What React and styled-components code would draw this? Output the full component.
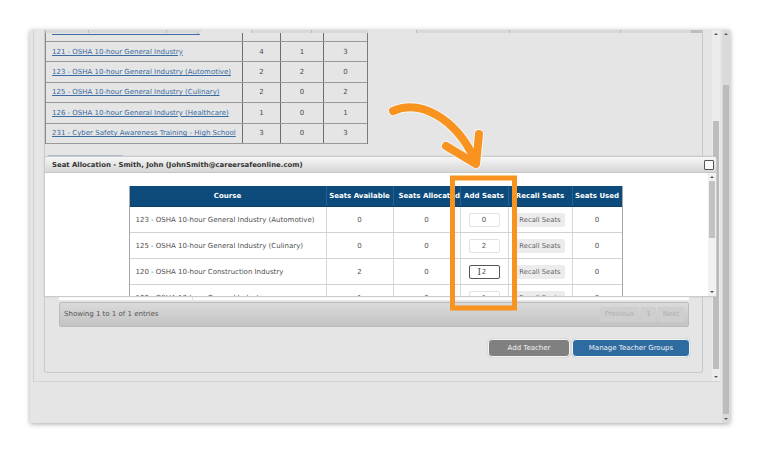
import React from 'react';
import styled, { createGlobalStyle } from 'styled-components';

const GlobalStyle = createGlobalStyle`
  html, body { margin: 0; padding: 0; background: #fff; }
  body { font-family: "DejaVu Sans", Verdana, sans-serif; }
  * { box-sizing: border-box; }
`;

const courses = [
  { name: '120 - OSHA 10-hour Construction Industry', a: 2, b: 1, c: 1 },
  { name: '121 - OSHA 10-hour General Industry', a: 4, b: 1, c: 3 },
  { name: '123 - OSHA 10-hour General Industry (Automotive)', a: 2, b: 2, c: 0 },
  { name: '125 - OSHA 10-hour General Industry (Culinary)', a: 2, b: 0, c: 2 },
  { name: '126 - OSHA 10-hour General Industry (Healthcare)', a: 1, b: 0, c: 1 },
  { name: '231 - Cyber Safety Awareness Training - High School', a: 3, b: 0, c: 3 },
];

const seats = [
  { name: '123 - OSHA 10-hour General Industry (Automotive)', avail: 0, alloc: 0, add: '0', used: 0 },
  { name: '125 - OSHA 10-hour General Industry (Culinary)', avail: 0, alloc: 0, add: '2', used: 0 },
  { name: '120 - OSHA 10-hour Construction Industry', avail: 2, alloc: 0, add: '2', used: 0, focus: true },
  { name: '122 - OSHA 10-hour General Industry', avail: 1, alloc: 0, add: '1', used: 0 },
];

const Scrollbar = ({ top, size, track, thumb }) => (
  <Bar $track={track}>
    <Arrow />
    <Track>
      <Thumb $thumb={thumb} style={{ marginTop: top, height: size }} />
    </Track>
    <Arrow $down />
  </Bar>
);

export default function App() {
  return (
    <>
      <GlobalStyle />
      <Stage>
        <Window>
          <WindowBody>
            <OuterPanel>
              <PanelScroll>
                <ContentBox>
                  <Strip>
                    <StripCell $w={43} />
                    <StripCell $w={78} />
                    <StripCell $w={35} />
                    <StripCell $w={50} $blank />
                    <StripCell $w={60} />
                    <StripCell $w={57} />
                    <StripCell $w={48} $blank />
                    <StripCell $w={93} />
                    <StripCell $w={111} />
                    <StripCell $w={71} />
                    <StripCell $w={13} $dark />
                  </Strip>
                  <TableClip>
                    <CourseTable>
                      {courses.map(c => (
                        <CourseRow key={c.name}>
                          <CourseName>{c.name}</CourseName>
                          <Num>{c.a}</Num>
                          <Num>{c.b}</Num>
                          <Num>{c.c}</Num>
                        </CourseRow>
                      ))}
                    </CourseTable>
                  </TableClip>
                  <Tab />
                  <TeacherArea>
                    <span /><span /><span /><span /><span />
                  </TeacherArea>
                  <InfoBar>
                    <InfoText>Showing 1 to 1 of 1 entries</InfoText>
                    <Pager>
                      <PageBtn>Previous</PageBtn>
                      <PageBtn>1</PageBtn>
                      <PageBtn>Next</PageBtn>
                    </Pager>
                  </InfoBar>
                  <ButtonRow>
                    <ActionButton $color="#808080" $w={82}>Add Teacher</ActionButton>
                    <ActionButton $color="#2d6ba1" $w={118}>Manage Teacher Groups</ActionButton>
                  </ButtonRow>
                </ContentBox>
              </PanelScroll>
              <Scrollbar top={83} size={248} track="#ececec" thumb="#bdbdbd" />
            </OuterPanel>
          </WindowBody>
          <Scrollbar top={47} size={329} track="#dadada" thumb="#bcbcbc" />
        </Window>

        <Dialog>
          <DialogHeader>
            <DialogTitle>Seat Allocation - Smith, John (JohnSmith@careersafeonline.com)</DialogTitle>
            <CloseBox />
          </DialogHeader>
          <DialogBody>
            <TableArea>
              <SeatTable>
                <SeatRow $head>
                  <HeadCell>Course</HeadCell>
                  <HeadCell>Seats Available</HeadCell>
                  <HeadCell>Seats Allocated</HeadCell>
                  <HeadCell>Add Seats</HeadCell>
                  <HeadCell>Recall Seats</HeadCell>
                  <HeadCell>Seats Used</HeadCell>
                </SeatRow>
                {seats.map(s => (
                  <SeatRow key={s.name}>
                    <SeatCourse>{s.name}</SeatCourse>
                    <SeatNum>{s.avail}</SeatNum>
                    <SeatNum>{s.alloc}</SeatNum>
                    <SeatNum>
                      <SeatInput $focus={s.focus}>
                        {s.add}
                        {s.focus && <Caret>I</Caret>}
                      </SeatInput>
                    </SeatNum>
                    <SeatNum>
                      <RecallButton>Recall Seats</RecallButton>
                    </SeatNum>
                    <SeatNum>{s.used}</SeatNum>
                  </SeatRow>
                ))}
              </SeatTable>
            </TableArea>
            <Scrollbar top={0} size={57} track="#f1f1f1" thumb="#c2c2c2" />
          </DialogBody>
        </Dialog>

        <Annotation viewBox="0 0 760 453" width="760" height="453">
          <rect x="452.5" y="178" width="62" height="130" fill="none" stroke="#f7931e" strokeWidth="5" />
          <g fill="none" strokeLinecap="round" strokeLinejoin="round">
            <path d="M393 111 C420 99 455 118 474 158" stroke="#fff" strokeWidth="10" opacity="0.7" />
            <path d="M446 146 L476 164 L479 134" stroke="#fff" strokeWidth="10" opacity="0.7" />
            <path d="M393 111 C420 99 455 118 474 158" stroke="#f7931e" strokeWidth="8" />
            <path d="M446 146 L476 164 L479 134" stroke="#f7931e" strokeWidth="8" />
          </g>
        </Annotation>
      </Stage>
    </>
  );
}

const Stage = styled.div`
  position: relative;
  width: 760px;
  height: 453px;
  padding: 30px 0 0 30px;
  overflow: hidden;
  background: #fff;
  -webkit-font-smoothing: antialiased;
`;

const Window = styled.div`
  width: 700px;
  height: 393px;
  background: #e5e5e5;
  box-shadow: 0 1px 5px rgba(0, 0, 0, 0.35);
  display: flex;
  overflow: hidden;
`;

const WindowBody = styled.div`
  flex: 1;
  display: flex;
  align-items: flex-start;
  padding: 0 2px 0 3px;
  min-width: 0;
`;

const OuterPanel = styled.div`
  flex: 1;
  min-width: 0;
  height: 352px;
  display: flex;
  border-left: 1px solid #d0d0d0;
  border-bottom: 1px solid #d4d4d4;
`;

const PanelScroll = styled.div`
  flex: 1;
  min-width: 0;
  padding: 0 9px 0 10px;
`;

const ContentBox = styled.div`
  height: 343px;
  border: 1px solid #c9c9c9;
  border-top: none;
  border-radius: 0 0 3px 3px;
  overflow: hidden;
  display: flex;
  flex-direction: column;
`;

const Strip = styled.div`
  height: 3px;
  display: flex;
  flex-shrink: 0;
  overflow: hidden;
`;

const StripCell = styled.div`
  width: ${p => p.$w}px;
  flex-shrink: 0;
  background: ${p => (p.$dark ? '#bdbdbd' : p.$blank ? 'transparent' : '#d9d9d9')};
  border-left: ${p => (p.$blank ? 'none' : '1px solid #bcbcbc')};
`;

const TableClip = styled.div`
  height: 112px;
  overflow: hidden;
  flex-shrink: 0;
`;

const CourseTable = styled.div`
  width: 323px;
  margin-top: -11.4px;
  border-right: 1px solid #7a7a7a;
  border-left: 1px solid #8a8a8a;
`;

const CourseRow = styled.div`
  display: grid;
  grid-template-columns: 196px 38px 43px 44px;
  height: 20.4px;
  border-bottom: 1px solid #9a9a9a;
  font-size: 7px;
`;

const CourseName = styled.a`
  display: flex;
  align-items: center;
  padding-left: 6px;
  color: #3a6ba1;
  text-decoration: underline;
  white-space: nowrap;
  overflow: hidden;
`;

const Num = styled.div`
  display: flex;
  align-items: center;
  justify-content: center;
  color: #4a4a4a;
  border-left: 1px solid #6e6e6e;
`;

const Tab = styled.div`
  width: 75px;
  height: 2px;
  margin: 9.5px 0 0 3px;
  background: #b5c4d4;
  flex-shrink: 0;
`;

const TeacherArea = styled.div`
  height: 141px;
  margin: 2px 13px 0 14px;
  background: #fff;
  display: grid;
  grid-template-columns: 134px 42px 14px 1fr;
  flex-shrink: 0;
  span { border-right: 1px solid #e2e2e2; }
`;

const InfoBar = styled.div`
  height: 25px;
  margin: 2px 13px 0 14px;
  padding: 0 4px;
  border: 1px solid #bbb;
  border-radius: 2px;
  background: linear-gradient(#dadada, #c3c3c3);
  display: flex;
  align-items: center;
  justify-content: space-between;
  flex-shrink: 0;
`;

const InfoText = styled.span`
  font-size: 7px;
  color: #555;
`;

const Pager = styled.div`
  display: flex;
  gap: 2px;
`;

const PageBtn = styled.span`
  padding: 3.5px 5px;
  font-size: 7px;
  color: #b0b0b0;
  background: #cecece;
  border-radius: 1px;
`;

const ButtonRow = styled.div`
  display: flex;
  justify-content: flex-end;
  gap: 2px;
  margin: 12px 12px 0 0;
`;

const ActionButton = styled.button`
  width: ${p => p.$w}px;
  height: 18px;
  padding: 0;
  border: 1px solid #f4f4f4;
  border-radius: 4px;
  background: ${p => p.$color};
  color: #f2f2f2;
  font-family: inherit;
  font-size: 7px;
  box-shadow: 0 0 0 0.5px #cfcfcf;
`;

const Bar = styled.div`
  width: 8px;
  flex-shrink: 0;
  display: flex;
  flex-direction: column;
  background: ${p => p.$track};
`;

const Arrow = styled.div`
  height: 8px;
  flex-shrink: 0;
  position: relative;
  &::after {
    content: '';
    position: absolute;
    left: 2px;
    top: 3px;
    border-left: 2px solid transparent;
    border-right: 2px solid transparent;
    ${p => (p.$down ? 'border-top: 2px solid #555;' : 'border-bottom: 2px solid #555;')}
  }
`;

const Track = styled.div`
  flex: 1;
  min-height: 0;
`;

const Thumb = styled.div`
  margin: 0 1px;
  background: ${p => p.$thumb};
`;

const Dialog = styled.div`
  position: absolute;
  left: 44px;
  top: 156px;
  width: 673px;
  height: 141px;
  background: #fff;
  border: 1px solid #cbcbcb;
  border-radius: 3px 3px 0 0;
  display: flex;
  flex-direction: column;
  box-shadow: 0 0 2px rgba(0, 0, 0, 0.12);
`;

const DialogHeader = styled.div`
  height: 16px;
  flex-shrink: 0;
  display: flex;
  align-items: center;
  justify-content: space-between;
  padding: 0 2px 0 7px;
  background: linear-gradient(#f6f6f6, #d6d6d6);
  border-bottom: 1px solid #c6c6c6;
  border-radius: 3px 3px 0 0;
`;

const DialogTitle = styled.span`
  font-size: 6.9px;
  font-weight: bold;
  color: #333;
`;

const CloseBox = styled.span`
  width: 10px;
  height: 10px;
  border: 1.5px solid #555;
  border-radius: 1px;
  background: #fafafa;
`;

const DialogBody = styled.div`
  flex: 1;
  min-height: 0;
  display: flex;
`;

const TableArea = styled.div`
  flex: 1;
  overflow: hidden;
  display: flex;
  justify-content: center;
  padding: 13px 2px 0 0;
`;

const SeatTable = styled.div`
  width: 494px;
  flex-shrink: 0;
  border-left: 1px solid #a8a8a8;
  border-right: 1px solid #a8a8a8;
  align-self: flex-start;
`;

const SeatRow = styled.div`
  display: grid;
  grid-template-columns: 196px 67px 67px 48px 64px 50px;
  height: ${p => (p.$head ? 21 : 26)}px;
  background: ${p => (p.$head ? '#0d4b7c' : '#fff')};
  border-bottom: 1px solid ${p => (p.$head ? '#0a3f69' : '#d2d2d2')};
`;

const HeadCell = styled.div`
  display: flex;
  align-items: center;
  justify-content: center;
  padding: 0 5px;
  overflow: hidden;
  white-space: nowrap;
  color: #fff;
  font-size: 7px;
  font-weight: bold;
  & + & { border-left: 1px solid #2a5f8b; }
  &:nth-child(3) { justify-content: flex-start; padding: 0 0 0 5px; }
`;

const SeatCourse = styled.div`
  display: flex;
  align-items: center;
  padding-left: 6px;
  color: #4f4f4f;
  font-size: 7px;
  white-space: nowrap;
`;

const SeatNum = styled.div`
  display: flex;
  align-items: center;
  justify-content: center;
  color: #4f4f4f;
  font-size: 7px;
  border-left: 1px solid #d6d6d6;
`;

const SeatInput = styled.span`
  position: relative;
  width: 31px;
  height: 14px;
  display: flex;
  align-items: center;
  justify-content: center;
  border: ${p => (p.$focus ? '1px solid #555' : '1px solid #e2e2e2')};
  border-radius: 2px;
  color: #555;
  font-size: 7px;
`;

const Caret = styled.span`
  position: absolute;
  left: 8px;
  top: 1px;
  font-family: "DejaVu Serif", serif;
  font-size: 9px;
  color: #444;
`;

const RecallButton = styled.span`
  padding: 3px 4px;
  background: #ececec;
  border-radius: 2px;
  color: #666;
  font-size: 6.8px;
  white-space: nowrap;
`;

const Annotation = styled.svg`
  position: absolute;
  left: 0;
  top: 0;
  pointer-events: none;
`;
